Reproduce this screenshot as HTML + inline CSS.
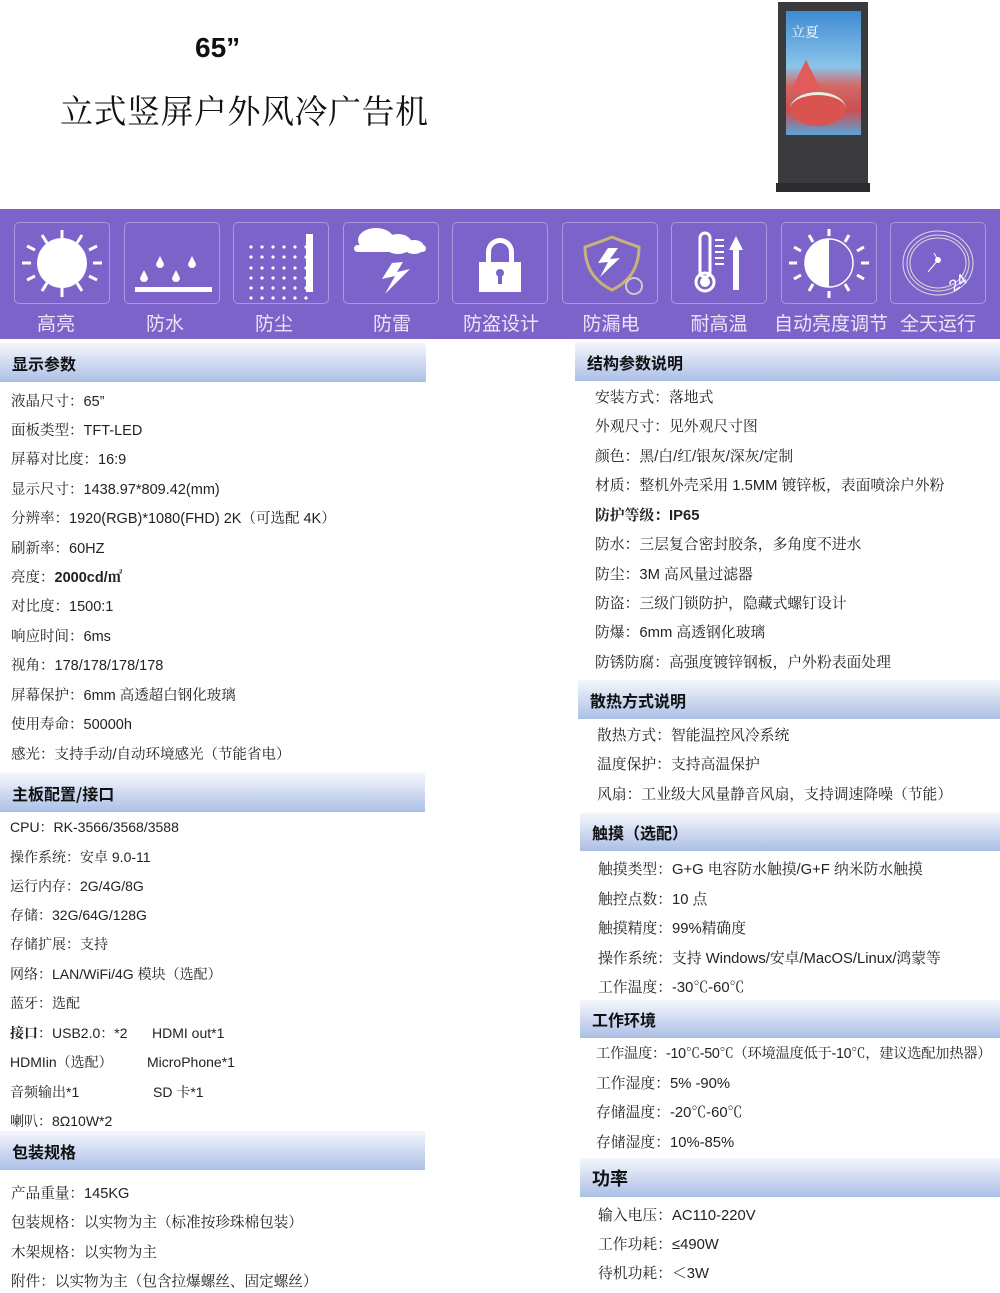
<!DOCTYPE html>
<html><head><meta charset="utf-8">
<style>
*{margin:0;padding:0;box-sizing:border-box}
body{width:1000px;height:1293px;position:relative;background:#fff;overflow:hidden;font-family:"Liberation Sans","Noto Serif CJK SC",serif;color:#222}
.a{position:absolute;white-space:nowrap}
.l{position:absolute;white-space:nowrap;font-size:14.5px;line-height:20px;color:#222}
.s{font-size:14px}
.r{font-size:14.8px!important}
.p{font-size:14.6px!important}
.h{position:absolute;background:linear-gradient(#f4f6fc,#dfe6f5 30%,#abbfe6);font-family:"Noto Sans CJK SC",sans-serif;font-weight:bold;font-size:16px;color:#111;padding-left:12px;display:flex;align-items:center}
.band{position:absolute;left:0;top:209px;width:1000px;height:130px;background:#7b63c9}
.ib{position:absolute;top:222px;width:96px;height:82px;border:1px solid #a898dc;border-radius:5px}
.lab{position:absolute;top:309px;font-family:"Noto Sans CJK SC",sans-serif;font-size:19px;color:#ebe6f7;white-space:nowrap;text-align:center;width:110px}
b{font-weight:bold}
</style></head><body>
<div class="a" style="left:195px;top:32px;font-size:28px;font-weight:bold;font-family:'Liberation Sans',sans-serif;color:#111">65”</div>
<div class="a" style="left:60px;top:86px;font-size:33px;font-family:'Noto Serif CJK SC',serif;color:#111;letter-spacing:0.5px">立式竖屏户外风冷广告机</div>

<div class="a" style="left:778px;top:2px;width:90px;height:190px;background:#3b3b3d"></div>
<div class="a" style="left:776px;top:183px;width:94px;height:9px;background:#2b2b2d"></div>
<div class="a" style="left:786px;top:11px;width:75px;height:124px;background:linear-gradient(#3f8bd3,#8cc3ea 45%,#d36a66 60%,#c94f52 80%,#5aa4d9)"></div>
<div class="a" style="left:791px;top:22px;font-size:14px;color:#fff;font-family:'Noto Serif CJK SC',serif">立夏</div>
<div class="a" style="left:790px;top:60px;width:0;height:0;border-left:16px solid transparent;border-right:16px solid transparent;border-bottom:32px solid #e25b5b"></div>
<div class="a" style="left:790px;top:92px;width:56px;height:34px;border-radius:50%;background:#d9534f;border-top:3px solid #e9efe0"></div>

<div class="band"></div>
<div class="ib" style="left:14px"></div><div class="ib" style="left:124px"></div><div class="ib" style="left:233px"></div><div class="ib" style="left:343px"></div><div class="ib" style="left:452px"></div><div class="ib" style="left:562px"></div><div class="ib" style="left:671px"></div><div class="ib" style="left:781px"></div><div class="ib" style="left:890px"></div>

<svg class="a" style="left:0;top:209px" width="1000" height="100" viewBox="0 209 1000 100">
<g fill="#fff" stroke="#fff">
<circle cx="62" cy="263" r="25" stroke="none"/>
<g stroke-width="3"><line x1="62" y1="230" x2="62" y2="238"/><line x1="62" y1="288" x2="62" y2="297"/><line x1="22" y1="263" x2="31" y2="263"/><line x1="93" y1="263" x2="102" y2="263"/><line x1="42" y1="235" x2="47" y2="243"/><line x1="82" y1="235" x2="77" y2="243"/><line x1="42" y1="291" x2="47" y2="283"/><line x1="82" y1="291" x2="77" y2="283"/><line x1="27" y1="246" x2="35" y2="250"/><line x1="97" y1="246" x2="89" y2="250"/><line x1="27" y1="280" x2="35" y2="276"/><line x1="97" y1="280" x2="89" y2="276"/></g>
<g stroke="none"><path d="M144 270 l-4 8 a4 4 0 0 0 8 0z"/><path d="M160 256 l-4 8 a4 4 0 0 0 8 0z"/><path d="M176 270 l-4 8 a4 4 0 0 0 8 0z"/><path d="M192 256 l-4 8 a4 4 0 0 0 8 0z"/><rect x="135" y="287" width="77" height="5"/></g>
<g stroke="none">
<g id="dr"><circle cx="251" cy="247" r="1.6"/><circle cx="262" cy="247" r="1.6"/><circle cx="273" cy="247" r="1.6"/><circle cx="284" cy="247" r="1.6"/><circle cx="295" cy="247" r="1.6"/><circle cx="306" cy="247" r="1.6"/></g>
<use href="#dr" y="10"/><use href="#dr" y="21"/><use href="#dr" y="31"/><use href="#dr" y="41"/><use href="#dr" y="51"/>
<rect x="306" y="242" width="7" height="58" transform="translate(0,-8)"/></g>
<g stroke="none"><ellipse cx="376" cy="240" rx="18" ry="12"/><ellipse cx="398" cy="244" rx="14" ry="10"/><ellipse cx="414" cy="247" rx="10" ry="7"/><rect x="354" y="245" width="72" height="7" rx="3.5"/><path d="M392 263 l-10 16 l13 -3 l-10 18 l25 -25 l-13 3 l6 -10z"/></g>
<g stroke="none"><path d="M486 262 v-10 a14 14 0 0 1 28 0 v10 h-5 v-10 a9 9 0 0 0 -18 0 v10z"/><rect x="479" y="262" width="42" height="30"/></g>
<circle cx="500" cy="273" r="4" fill="#7b63c9" stroke="none"/><rect x="498" y="275" width="4" height="9" fill="#7b63c9" stroke="none"/>
<path d="M585 247 q 15 -5 27 -10 q 12 5 27 10 q 0 30 -27 43 q -27 -13 -27 -43z" fill="none" stroke="#c8b27a" stroke-width="3"/>
<path d="M608 248 l-10 15 l10 -1 l-8 15 l20 -19 l-10 1 l8 -11z" stroke="none"/>
<circle cx="634" cy="286" r="8" fill="none" stroke="#ccc" stroke-width="2"/>
<rect x="700" y="233" width="10" height="44" rx="5" fill="none" stroke-width="3"/><circle cx="705" cy="282" r="9" fill="none" stroke-width="3"/><circle cx="705" cy="282" r="5" stroke="none"/><g stroke-width="2"><line x1="715" y1="240" x2="724" y2="240"/><line x1="715" y1="246" x2="724" y2="246"/><line x1="715" y1="252" x2="724" y2="252"/><line x1="715" y1="258" x2="724" y2="258"/><line x1="715" y1="264" x2="724" y2="264"/></g>
<path d="M733 290 v-40 h-4 l7 -14 l7 14 h-4 v40z" stroke="none"/>
<circle cx="829" cy="263" r="24" fill="none" stroke-width="1.5"/><path d="M829 239 a24 24 0 0 0 0 48z" stroke="none"/>
<g stroke-width="3"><line x1="829" y1="229" x2="829" y2="236"/><line x1="829" y1="291" x2="829" y2="298"/><line x1="789" y1="263" x2="797" y2="263"/><line x1="861" y1="263" x2="869" y2="263"/><line x1="809" y1="235" x2="813" y2="242"/><line x1="849" y1="235" x2="845" y2="242"/><line x1="809" y1="291" x2="813" y2="284"/><line x1="849" y1="291" x2="845" y2="284"/><line x1="794" y1="247" x2="801" y2="251"/><line x1="864" y1="247" x2="857" y2="251"/><line x1="794" y1="279" x2="801" y2="275"/><line x1="864" y1="279" x2="857" y2="275"/></g>
<g fill="none" stroke="#ddd" stroke-width="1"><ellipse cx="938" cy="263" rx="35" ry="32"/><ellipse cx="938" cy="263" rx="31" ry="28"/><ellipse cx="938" cy="263" rx="28" ry="25"/></g>
<circle cx="938" cy="260" r="3" stroke="none"/><line x1="938" y1="260" x2="928" y2="272" stroke-width="1"/><line x1="938" y1="260" x2="934" y2="253" stroke-width="1"/>
<text x="950" y="290" font-size="16" fill="#fff" stroke="none" font-family="Liberation Sans" transform="rotate(-35 955 285)">24</text>
</g></svg>

<div class="lab" style="left:1px">高亮</div><div class="lab" style="left:110px">防水</div><div class="lab" style="left:219px">防尘</div><div class="lab" style="left:337px">防雷</div><div class="lab" style="left:446px">防盗设计</div><div class="lab" style="left:556px">防漏电</div><div class="lab" style="left:664px">耐高温</div><div class="lab" style="left:774px;width:112px">自动亮度调节</div><div class="lab" style="left:883px">全天运行</div>

<div class="h" style="left:0;top:343px;width:426px;height:39px">显示参数</div>
<div class="h" style="left:0;top:773px;width:425px;height:39px">主板配置/接口</div>
<div class="h" style="left:0;top:1131px;width:425px;height:39px">包装规格</div>
<div class="h" style="left:575px;top:342px;width:425px;height:39px">结构参数说明</div>
<div class="h" style="left:578px;top:680px;width:422px;height:39px">散热方式说明</div>
<div class="h" style="left:580px;top:813px;width:420px;height:38px">触摸（选配）</div>
<div class="h" style="left:580px;top:1000px;width:420px;height:38px">工作环境</div>
<div class="h" style="left:580px;top:1158px;width:420px;height:39px;font-size:18px">功率</div>

<div class="l" style="left:11px;top:392px">液晶尺寸：65”</div>
<div class="l" style="left:11px;top:421px">面板类型：TFT-LED</div>
<div class="l" style="left:11px;top:450px">屏幕对比度：16:9</div>
<div class="l" style="left:11px;top:480px">显示尺寸：1438.97*809.42(mm)</div>
<div class="l" style="left:11px;top:509px">分辨率：1920(RGB)*1080(FHD) 2K（可选配 4K）</div>
<div class="l" style="left:11px;top:539px">刷新率：60HZ</div>
<div class="l" style="left:11px;top:568px">亮度：<b>2000cd/㎡</b></div>
<div class="l" style="left:11px;top:597px">对比度：1500:1</div>
<div class="l" style="left:11px;top:627px">响应时间：6ms</div>
<div class="l" style="left:11px;top:656px">视角：178/178/178/178</div>
<div class="l" style="left:11px;top:686px">屏幕保护：6mm 高透超白钢化玻璃</div>
<div class="l" style="left:11px;top:715px">使用寿命：50000h</div>
<div class="l" style="left:11px;top:745px">感光：支持手动/自动环境感光（节能省电）</div>

<div class="l s" style="left:10px;top:817px">CPU：RK-3566/3568/3588</div>
<div class="l s" style="left:10px;top:847px">操作系统：安卓 9.0-11</div>
<div class="l s" style="left:10px;top:876px">运行内存：2G/4G/8G</div>
<div class="l s" style="left:10px;top:905px">存储：32G/64G/128G</div>
<div class="l s" style="left:10px;top:934px">存储扩展：支持</div>
<div class="l s" style="left:10px;top:964px">网络：LAN/WiFi/4G 模块（选配）</div>
<div class="l s" style="left:10px;top:993px">蓝牙：选配</div>
<div class="l s" style="left:10px;top:1023px"><b>接口</b>：USB2.0：*2</div><div class="l s" style="left:152px;top:1023px">HDMI out*1</div>
<div class="l s" style="left:10px;top:1052px">HDMIin（选配）</div><div class="l s" style="left:147px;top:1052px">MicroPhone*1</div>
<div class="l s" style="left:10px;top:1082px">音频输出*1</div><div class="l s" style="left:153px;top:1082px">SD 卡*1</div>
<div class="l s" style="left:10px;top:1111px">喇叭：8Ω10W*2</div>

<div class="l p" style="left:11px;top:1184px">产品重量：145KG</div>
<div class="l p" style="left:11px;top:1213px">包装规格：以实物为主（标准按珍珠棉包装）</div>
<div class="l p" style="left:11px;top:1243px">木架规格：以实物为主</div>
<div class="l p" style="left:11px;top:1272px">附件：以实物为主（包含拉爆螺丝、固定螺丝）</div>

<div class="l r" style="left:595px;top:388px">安装方式：落地式</div>
<div class="l r" style="left:595px;top:417px">外观尺寸：见外观尺寸图</div>
<div class="l r" style="left:595px;top:447px">颜色：黑/白/红/银灰/深灰/定制</div>
<div class="l r" style="left:595px;top:476px">材质：整机外壳采用 1.5MM 镀锌板，表面喷涂户外粉</div>
<div class="l r" style="left:595px;top:506px"><b>防护等级：IP65</b></div>
<div class="l r" style="left:595px;top:535px">防水：三层复合密封胶条，多角度不进水</div>
<div class="l r" style="left:595px;top:565px">防尘：3M 高风量过滤器</div>
<div class="l r" style="left:595px;top:594px">防盗：三级门锁防护，隐藏式螺钉设计</div>
<div class="l r" style="left:595px;top:623px">防爆：6mm 高透钢化玻璃</div>
<div class="l r" style="left:595px;top:653px">防锈防腐：高强度镀锌钢板，户外粉表面处理</div>

<div class="l r" style="left:597px;top:726px">散热方式：智能温控风冷系统</div>
<div class="l r" style="left:597px;top:755px">温度保护：支持高温保护</div>
<div class="l r" style="left:597px;top:785px">风扇：工业级大风量静音风扇，支持调速降噪（节能）</div>

<div class="l r" style="left:598px;top:860px">触摸类型：G+G 电容防水触摸/G+F 纳米防水触摸</div>
<div class="l r" style="left:598px;top:890px">触控点数：10 点</div>
<div class="l r" style="left:598px;top:919px">触摸精度：99%精确度</div>
<div class="l r" style="left:598px;top:949px">操作系统：支持 Windows/安卓/MacOS/Linux/鸿蒙等</div>
<div class="l r" style="left:598px;top:978px">工作温度：-30℃-60℃</div>

<div class="l" style="left:596px;top:1044px;font-size:14.3px;letter-spacing:-0.3px">工作温度：-10℃-50℃（环境温度低于-10℃，建议选配加热器）</div>
<div class="l r" style="left:596px;top:1074px">工作湿度：5% -90%</div>
<div class="l r" style="left:596px;top:1103px">存储温度：-20℃-60℃</div>
<div class="l r" style="left:596px;top:1133px">存储湿度：10%-85%</div>

<div class="l r" style="left:598px;top:1206px">输入电压：AC110-220V</div>
<div class="l r" style="left:598px;top:1235px">工作功耗：≤490W</div>
<div class="l r" style="left:598px;top:1264px">待机功耗：＜3W</div>
</body></html>
